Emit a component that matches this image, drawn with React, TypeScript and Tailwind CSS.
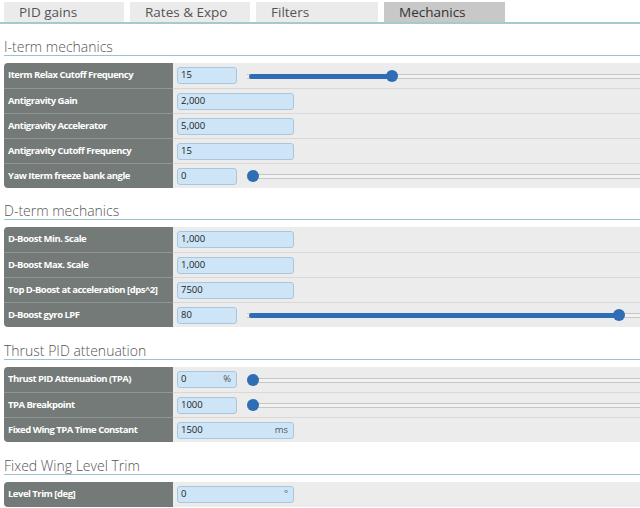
import React from "react";

type Row = {
  label: string;
  value: string;
  wide?: boolean;
  unit?: string;
  slider?: number;
};

type Section = { title: string; rows: Row[] };

const tabs = [
  { name: "PID gains", w: "w-[120px]" },
  { name: "Rates & Expo", w: "w-[120px]" },
  { name: "Filters", w: "w-[122px]" },
  { name: "Mechanics", w: "w-[121px]", active: true },
];

const sections: Section[] = [
  {
    title: "I-term mechanics",
    rows: [
      { label: "Iterm Relax Cutoff Frequency", value: "15", slider: 0.366 },
      { label: "Antigravity Gain", value: "2,000", wide: true },
      { label: "Antigravity Accelerator", value: "5,000", wide: true },
      { label: "Antigravity Cutoff Frequency", value: "15", wide: true },
      { label: "Yaw Iterm freeze bank angle", value: "0", slider: 0 },
    ],
  },
  {
    title: "D-term mechanics",
    rows: [
      { label: "D-Boost Min. Scale", value: "1,000", wide: true },
      { label: "D-Boost Max. Scale", value: "1,000", wide: true },
      { label: "Top D-Boost at acceleration [dps^2]", value: "7500", wide: true },
      { label: "D-Boost gyro LPF", value: "80", slider: 0.963 },
    ],
  },
  {
    title: "Thrust PID attenuation",
    rows: [
      { label: "Thrust PID Attenuation (TPA)", value: "0", unit: "%", slider: 0 },
      { label: "TPA Breakpoint", value: "1000", slider: 0 },
      { label: "Fixed Wing TPA Time Constant", value: "1500", unit: "ms", wide: true },
    ],
  },
  {
    title: "Fixed Wing Level Trim",
    rows: [{ label: "Level Trim [deg]", value: "0", unit: "°", wide: true }],
  },
];

const Slider = ({ pos }: { pos: number }) => {
  const center = 6 + pos * 380;
  return (
    <div className="relative ml-[10px] h-[24px] w-[410px] shrink-0">
      <div className="absolute left-0 right-0 top-[10px] h-[5px] border-y border-[#c6c6c6] bg-[#f2f2f2]" />
      <div
        className="absolute left-[2px] top-[10px] h-[5px] rounded-full bg-[#2f6db4]"
        style={{ width: center }}
      />
      <div
        className="absolute top-[6px] h-[12px] w-[12px] rounded-full bg-[#2f6db4]"
        style={{ left: center - 6 }}
      />
    </div>
  );
};

const App = () => {
  return (
    <div
      className="h-[508px] w-[640px] overflow-hidden bg-white text-[#444]"
      style={{ fontFamily: '"Open Sans", "DejaVu Sans", sans-serif' }}
    >
      <div className="flex gap-[6px] pl-[4px] pt-[2px]">
        {tabs.map((tab) => (
          <div
            key={tab.name}
            className={`${tab.w} h-[20px] pl-[15px] text-[13.5px] leading-[20px] ${
              tab.active ? "bg-[#c8c8c8] text-[#333]" : "bg-[#ebebeb] text-[#555]"
            }`}
          >
            {tab.name}
          </div>
        ))}
      </div>
      <div className="h-[2px] bg-[#a6c8d4]" />

      <div className="pl-[4px]">
        {sections.map((section, si) => (
          <div key={section.title} className={si < 2 ? "pt-[14px]" : "pt-[15px]"}>
            <h2 className="text-[14px] font-light leading-[17px] text-[#555]">
              {section.title}
            </h2>
            <div className="h-[1px] bg-[#9cc3d1]" />
            <div className="mt-[7px] overflow-hidden rounded-l-[4px]">
              {section.rows.map((row, ri) => (
                <div
                  key={row.label}
                  className={`flex h-[25px] ${ri > 0 ? "border-t border-[#d8d8d8]" : ""}`}
                >
                  <div
                    className={`flex w-[169px] shrink-0 items-center whitespace-nowrap bg-[#737a77] pl-[4px] text-[9.5px] font-bold tracking-[-0.5px] text-white ${
                      ri > 0 ? "-mt-px border-t border-[#8f9592]" : ""
                    }`}
                  >
                    {row.label}
                  </div>
                  <div className="flex flex-1 items-center bg-[#ececec] pl-[4px]">
                    <div
                      className={`flex h-[17px] ${
                        row.wide ? "w-[117px]" : "w-[60px]"
                      } shrink-0 items-center justify-between rounded-[3px] border border-[#a9c6dc] bg-[#cde5f7] px-[3px] text-[9.5px] text-[#222]`}
                    >
                      <span>{row.value}</span>
                      {row.unit && <span className="pr-[2px] text-[#555]">{row.unit}</span>}
                    </div>
                    {row.slider !== undefined && <Slider pos={row.slider} />}
                  </div>
                </div>
              ))}
            </div>
          </div>
        ))}
      </div>
    </div>
  );
};

export default App;
